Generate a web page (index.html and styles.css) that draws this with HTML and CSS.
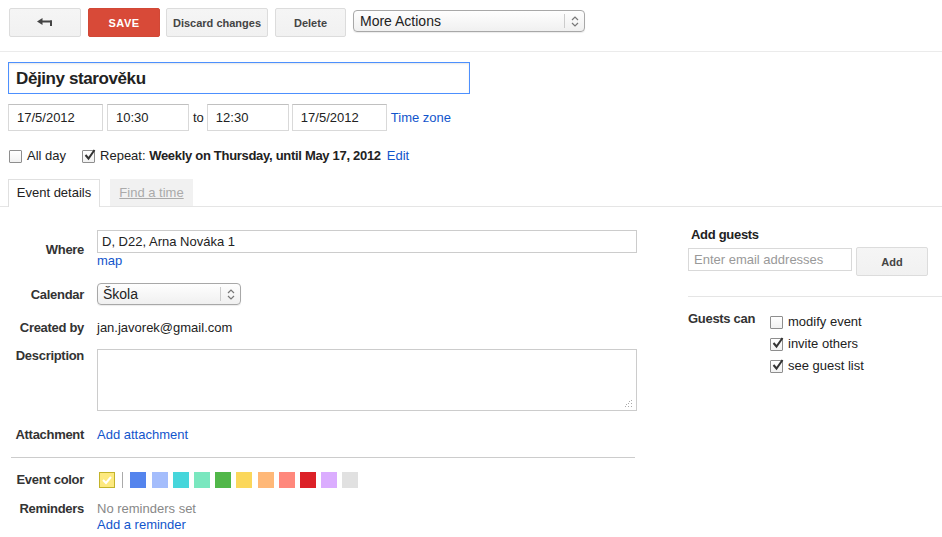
FILE: index.html
```html
<!DOCTYPE html>
<html>
<head>
<meta charset="utf-8">
<link rel="stylesheet" href="styles.css">
</head>
<body>
<div class="toolbar">
  <div class="btn back"><svg width="16" height="9" viewBox="0 0 16 9"><polygon points="0,3.5 5.5,0 5.5,7" fill="#444"/><rect x="4" y="2.5" width="11" height="2" fill="#444"/><rect x="13" y="2.5" width="2" height="5.5" fill="#444"/></svg></div>
  <div class="btn save">SAVE</div>
  <div class="btn discard">Discard changes</div>
  <div class="btn delete">Delete</div>
  <div class="select more"><span class="sel-text">More Actions</span><span class="sel-arrows"><svg width="8" height="11" viewBox="0 0 8 11"><path d="M1 4 L4 1 L7 4 M1 7 L4 10 L7 7" fill="none" stroke="#777" stroke-width="1.2"/></svg></span></div>
</div>

<div class="top">
  <div class="title">Dějiny starověku</div>
  <div class="dates">
    <div class="field date">17/5/2012</div>
    <div class="field time">10:30</div>
    <span class="to">to</span>
    <div class="field time">12:30</div>
    <div class="field date">17/5/2012</div>
    <a class="link tz">Time zone</a>
  </div>
  <div class="checks">
    <span class="cb"></span><span class="cb-label allday">All day</span>
    <span class="cb checked"><svg width="13" height="13" viewBox="0 0 13 13"><path d="M2.5 6 L5.5 9.5 L11.5 1" fill="none" stroke="#333" stroke-width="2"/></svg></span>
    <span class="cb-label">Repeat: <b>Weekly on Thursday, until May 17, 2012</b></span>
    <a class="link edit">Edit</a>
  </div>
</div>

<div class="tabs">
  <div class="tab active">Event details</div>
  <div class="tab inactive"><span>Find a time</span></div>
</div>

<div class="main">
  <div class="left">
    <div class="row where">
      <div class="label">Where</div>
      <div class="content">
        <div class="field wide">D, D22, Arna Nováka 1</div>
        <a class="link">map</a>
      </div>
    </div>
    <div class="row calendar">
      <div class="label">Calendar</div>
      <div class="content">
        <div class="select cal"><span class="sel-text">Škola</span><span class="sel-arrows"><svg width="8" height="11" viewBox="0 0 8 11"><path d="M1 4 L4 1 L7 4 M1 7 L4 10 L7 7" fill="none" stroke="#777" stroke-width="1.2"/></svg></span></div>
      </div>
    </div>
    <div class="row created">
      <div class="label">Created by</div>
      <div class="content">jan.javorek@gmail.com</div>
    </div>
    <div class="row desc">
      <div class="label">Description</div>
      <div class="content">
        <div class="textarea"><svg class="grip" width="9" height="9" viewBox="0 0 9 9"><g fill="#aaa"><rect x="7" y="1" width="1" height="1"/><rect x="7" y="4" width="1" height="1"/><rect x="7" y="7" width="1" height="1"/><rect x="4" y="4" width="1" height="1"/><rect x="4" y="7" width="1" height="1"/><rect x="1" y="7" width="1" height="1"/><rect x="5" y="2" width="1" height="1"/><rect x="2" y="5" width="1" height="1"/></g></svg></div>
      </div>
    </div>
    <div class="row attach">
      <div class="label">Attachment</div>
      <div class="content"><a class="link">Add attachment</a></div>
    </div>
    <div class="divider"></div>
    <div class="row color">
      <div class="label">Event color</div>
      <div class="content swatches">
        <span class="swatch selected"><svg width="14" height="14" viewBox="0 0 14 14"><path d="M3 7 L6 10 L11 4" fill="none" stroke="#fff" stroke-width="2"/></svg></span>
        <span class="sep"></span>
        <span class="swatch c1"></span>
        <span class="swatch c2"></span>
        <span class="swatch c3"></span>
        <span class="swatch c4"></span>
        <span class="swatch c5"></span>
        <span class="swatch c6"></span>
        <span class="swatch c7"></span>
        <span class="swatch c8"></span>
        <span class="swatch c9"></span>
        <span class="swatch c10"></span>
        <span class="swatch c11"></span>
      </div>
    </div>
    <div class="row reminders">
      <div class="label">Reminders</div>
      <div class="content">
        <div class="muted">No reminders set</div>
        <a class="link">Add a reminder</a>
      </div>
    </div>
  </div>

  <div class="right">
    <div class="guests-title">Add guests</div>
    <div class="guest-add">
      <div class="field email">Enter email addresses</div>
      <div class="btn add">Add</div>
    </div>
    <div class="rdivider"></div>
    <div class="perms">
      <div class="perm-label">Guests can</div>
      <div class="perm-opts">
        <div class="opt"><span class="cb"></span><span>modify event</span></div>
        <div class="opt"><span class="cb checked"><svg width="13" height="13" viewBox="0 0 13 13"><path d="M2.5 6 L5.5 9.5 L11.5 1" fill="none" stroke="#333" stroke-width="2"/></svg></span><span>invite others</span></div>
        <div class="opt"><span class="cb checked"><svg width="13" height="13" viewBox="0 0 13 13"><path d="M2.5 6 L5.5 9.5 L11.5 1" fill="none" stroke="#333" stroke-width="2"/></svg></span><span>see guest list</span></div>
      </div>
    </div>
  </div>
</div>
</body>
</html>
```

FILE: styles.css
```css
* { box-sizing: border-box; }
body {
  margin: 0;
  font-family: "Liberation Sans", Arial, sans-serif;
  font-size: 13px;
  line-height: 16px;
  color: #222;
  background: #fff;
}
b { letter-spacing: -0.3px; }
.link { color: #15c; text-decoration: none; }

.toolbar {
  display: flex;
  align-items: flex-start;
  gap: 7px;
  padding: 8px 0 14px 9px;
  border-bottom: 1px solid #ebebeb;
}
.btn {
  height: 29px;
  display: flex;
  align-items: center;
  justify-content: center;
  background: linear-gradient(#f5f5f5, #f1f1f1);
  border: 1px solid #dcdcdc;
  border-radius: 2px;
  font-size: 11px;
  font-weight: bold;
  color: #444;
}
.back { width: 72px; }
.save {
  width: 72px;
  background: #d84a38;
  border-color: #d14836;
  color: #fff;
  letter-spacing: 0.5px;
}
.discard { width: 102px; margin-left: -1px; }
.delete { width: 71px; }

.select {
  display: flex;
  align-items: center;
  height: 22px;
  border: 1px solid #a8a8a8;
  border-radius: 4px;
  background: linear-gradient(#fefefe, #f0f0f0);
  box-shadow: 0 1px 1px rgba(0,0,0,0.08);
  font-size: 14px;
  color: #222;
}
.sel-text { flex: 1; padding-left: 6px; }
.sel-arrows {
  width: 20px;
  height: 14px;
  border-left: 1px solid #ccc;
  display: flex;
  align-items: center;
  justify-content: center;
}
.more { width: 232px; margin-top: 2px; }

.top { padding: 10px 8px 0; }
.title {
  width: 462px;
  height: 32px;
  border: 1px solid #4d90fe;
  box-shadow: inset 0 1px 2px rgba(0,0,0,0.1);
  padding: 6px 7px;
  font-size: 17px;
  line-height: 20px;
  font-weight: bold;
  letter-spacing: -0.4px;
  color: #222;
}
.dates {
  display: flex;
  align-items: center;
  margin-top: 10px;
}
.field {
  height: 27px;
  border: 1px solid #d9d9d9;
  border-top-color: #c0c0c0;
  padding: 0 8px;
  display: flex;
  align-items: center;
  color: #222;
  background: #fff;
}
.date { width: 95px; }
.time { width: 82px; }
.dates .date:first-child { margin-right: 4px; }
.to { margin: 0 3px 0 4px; }
.dates .time + .date { margin-left: 3px; }
.tz { margin-left: 4px; }

.checks {
  display: flex;
  align-items: center;
  height: 18px;
  margin-top: 16px;
  padding-left: 1px;
}
.cb {
  width: 13px;
  height: 13px;
  border: 1px solid #8e8e8e;
  border-radius: 1px;
  background: linear-gradient(#fff, #f1f1f1);
  position: relative;
  flex: none;
}
.cb svg { position: absolute; left: 0; top: -2px; }
.cb-label { margin-left: 5px; }
.allday { margin-right: 16px; }
.edit { margin-left: 6px; }

.tabs {
  display: flex;
  gap: 10px;
  margin-top: 14px;
  padding-left: 8px;
  border-bottom: 1px solid #e5e5e5;
}
.tab {
  height: 27px;
  display: flex;
  align-items: center;
  justify-content: center;
  white-space: nowrap;
}
.tab.active {
  width: 92px;
  border: 1px solid #e0e0e0;
  border-bottom: none;
  background: #fff;
  margin-bottom: -1px;
  height: 28px;
  padding-bottom: 1px;
}
.tab.inactive {
  width: 83px;
  background: #f1f1f1;
  color: #aaa;
}
.tab.inactive span { text-decoration: underline; }

.main {
  display: flex;
  padding: 19px 0 0 8px;
}
.left { width: 628px; padding-top: 4px; flex: none; }
.row { display: flex; }
.label {
  width: 76px;
  text-align: right;
  font-weight: bold;
  letter-spacing: -0.3px;
  color: #333;
  flex: none;
}
.content { margin-left: 13px; flex: 1; }
.content .link { display: block; }
.where .label { padding-top: 12px; }
.field.wide { width: 540px; height: 23px; border-color: #ccc; padding: 0 4px; }
.calendar { margin-top: 14px; }
.calendar .label { padding-top: 4px; }
.cal { width: 144px; }
.cal .sel-text { padding-left: 5px; }
.created { margin-top: 15px; }
.desc { margin-top: 12px; }
.textarea {
  width: 540px;
  height: 62px;
  margin-top: 1px;
  border: 1px solid #ccc;
  position: relative;
}
.grip { position: absolute; right: 3px; bottom: 2px; }
.attach { margin-top: 16px; }
.divider {
  margin: 14px 0 0 3px;
  width: 624px;
  border-top: 1px solid #ccc;
}
.color { margin-top: 14px; }
.swatches { display: flex; align-items: center; gap: 5.2px; margin-left: 15px; }
.swatch { width: 16px; height: 16px; flex: none; }
.swatch.selected {
  background: #fde97f;
  border: 1px solid #c3b32a;
  display: flex;
  align-items: center;
  justify-content: center;
}
.sep { width: 1px; height: 16px; background: #aaa; margin: 0 2px; }
.c1 { background: #5484ed; }
.c2 { background: #a4bdfc; }
.c3 { background: #46d6db; }
.c4 { background: #7ae7bf; }
.c5 { background: #51b749; }
.c6 { background: #fbd75b; }
.c7 { background: #ffb878; }
.c8 { background: #ff887c; }
.c9 { background: #dc2127; }
.c10 { background: #dbadff; }
.c11 { background: #e1e1e1; }
.reminders { margin-top: 13px; }
.muted { color: #888; }

.right { margin-left: 52px; flex: 1; padding-top: 1px; }
.guests-title { font-weight: bold; letter-spacing: -0.3px; color: #222; padding-left: 3px; }
.guest-add { display: flex; gap: 4px; margin-top: 4px; }
.field.email {
  width: 164px;
  height: 23px;
  margin-top: 1px;
  padding: 0 5px;
  border-color: #d9d9d9;
  color: #999;
}
.add { width: 72px; }
.rdivider { margin-top: 20px; border-top: 1px solid #e5e5e5; }
.perms { display: flex; margin-top: 14px; }
.perm-label { width: 82px; font-weight: bold; letter-spacing: -0.3px; color: #333; }
.perm-opts { padding-top: 3px; margin-top: -3px; }
.opt { display: flex; align-items: center; height: 22px; }
.opt .cb { margin-right: 5px; }
```
